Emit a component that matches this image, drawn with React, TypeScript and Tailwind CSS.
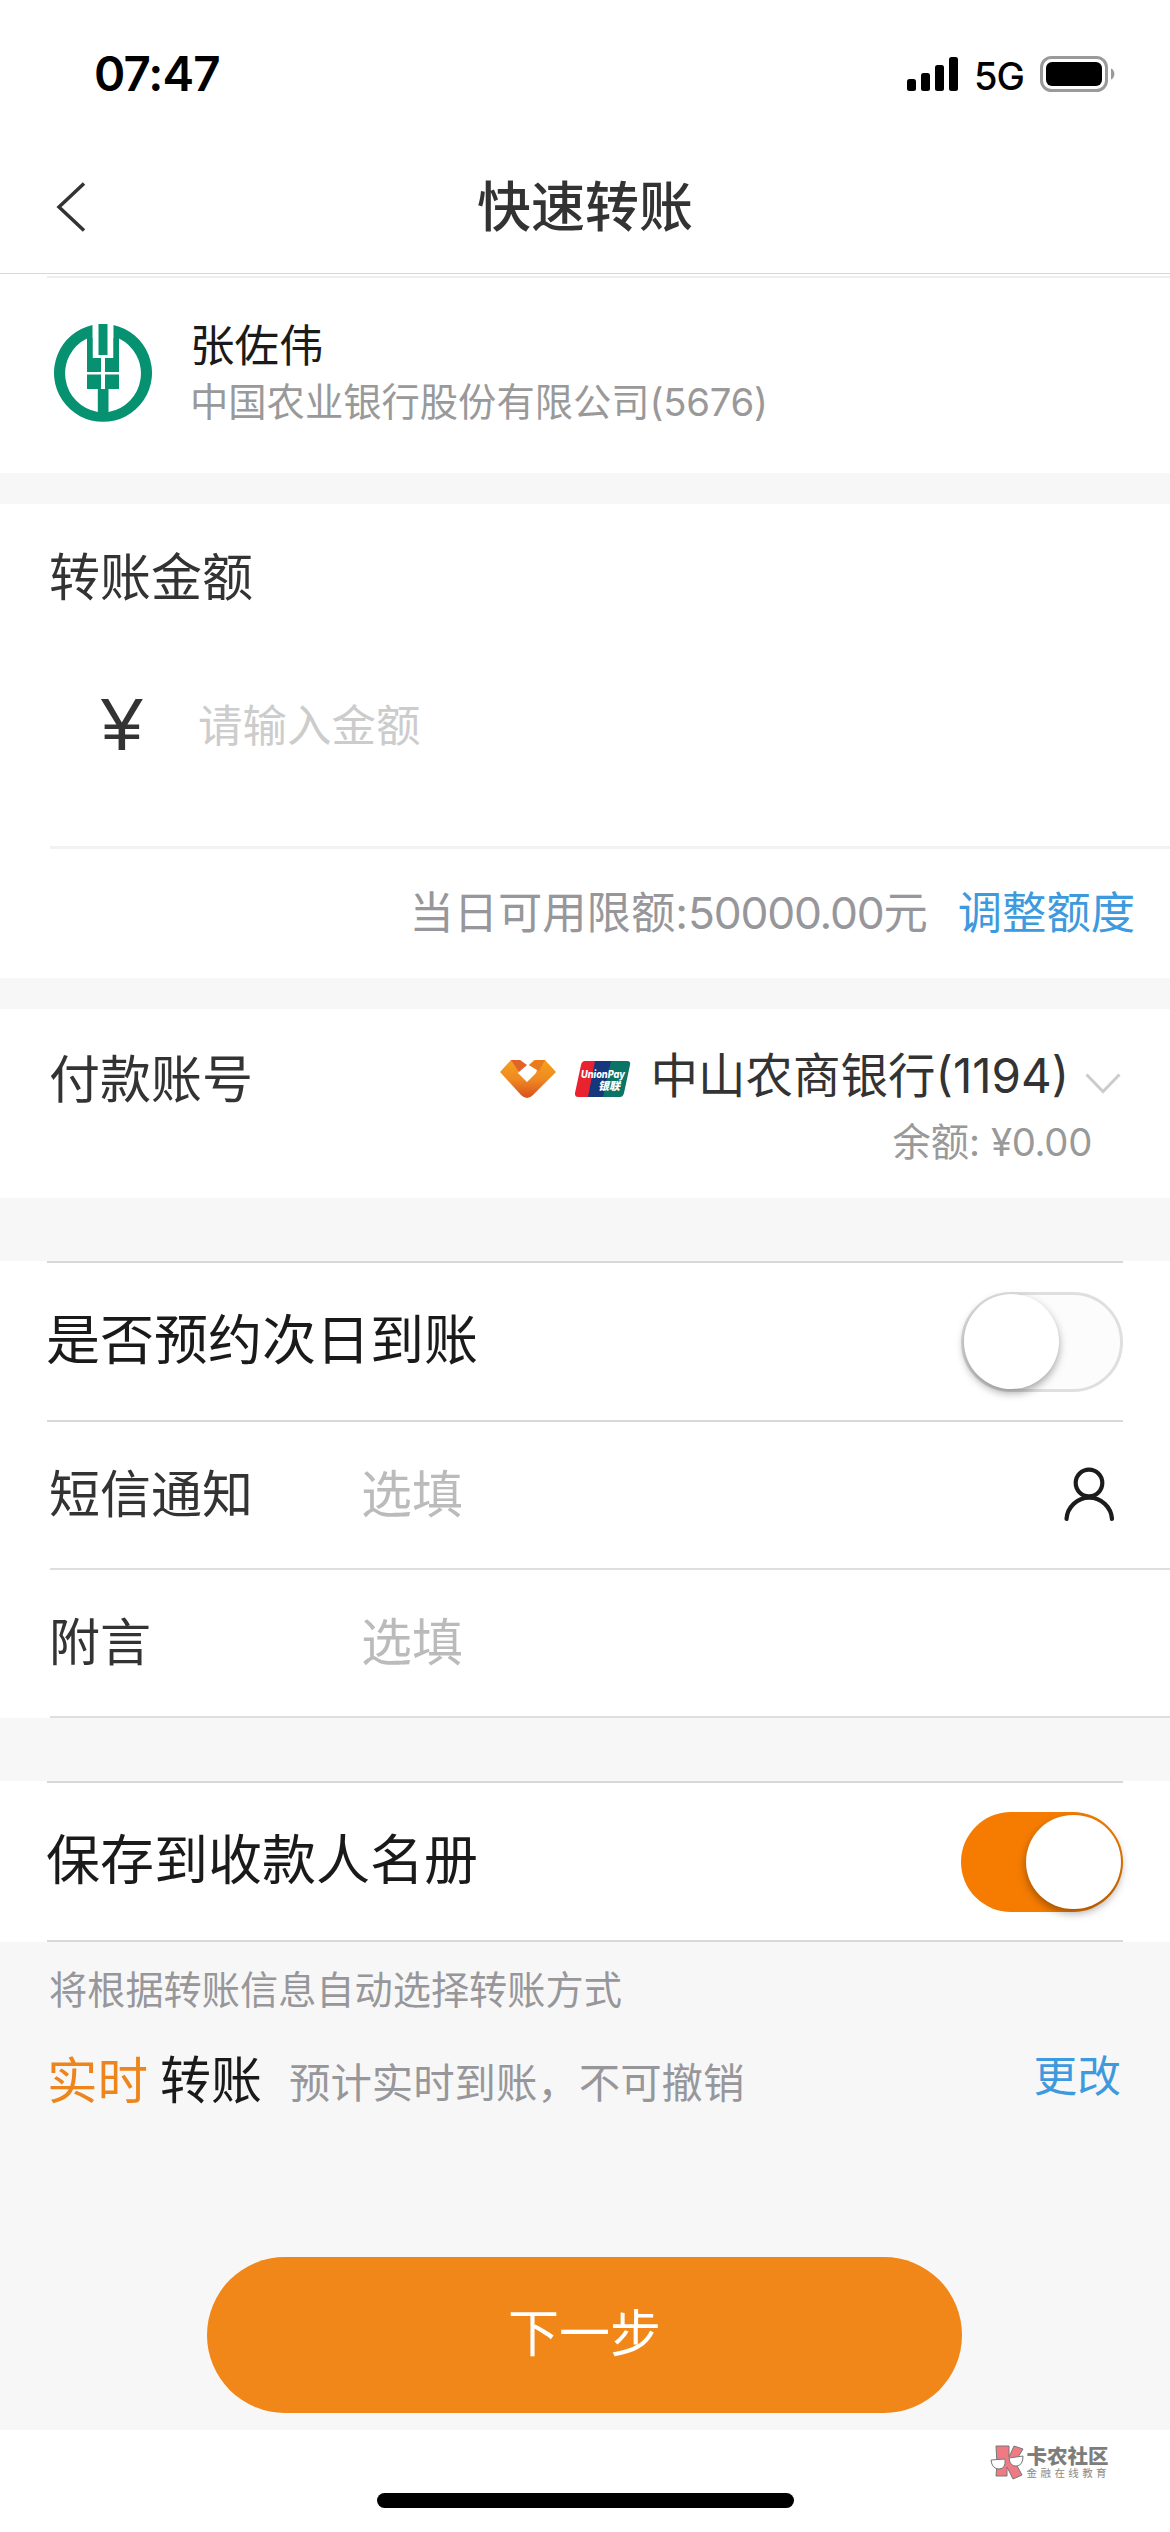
import type { ReactNode } from "react";

function StatusBar() {
    return (
        <div className="flex h-[148px] items-center justify-between pl-[94px] pr-[55px]">
            <div className="text-[47.500px] font-semibold leading-none tracking-[-0.9px] text-black">07:47</div>
            <div className="flex items-center">
                <svg width="51" height="34" viewBox="0 0 51 34" fill="#000">
                    <rect x="0" y="22" width="9" height="12" rx="2.5" />
                    <rect x="14" y="16" width="9" height="18" rx="2.5" />
                    <rect x="28" y="8" width="9" height="26" rx="2.5" />
                    <rect x="42" y="0" width="9" height="34" rx="2.5" />
                </svg>
                <div className="ml-[16px] mt-[3px] text-[38px] font-medium leading-none tracking-[-1px] text-black">5G</div>
                <svg className="ml-[16px]" width="75" height="36" viewBox="0 0 75 36">
                    <rect x="1.5" y="1.5" width="65" height="33" rx="10" fill="none" stroke="#9a9a9a" strokeWidth="3" />
                    <rect x="6" y="6" width="56" height="24" rx="6" fill="#000" />
                    <path d="M71 12.5c4.500 1.500 4.500 9.500 0 11z" fill="#9a9a9a" />
                </svg>
            </div>
        </div>
    );
}

function NavBar() {
    return (
        <div className="grid h-[126px] grid-cols-3 items-center border-b border-[#d8d8d8] px-[56px] pb-[7px]">
            <svg width="30" height="50" viewBox="0 0 30 50" fill="none" stroke="#333" strokeWidth="3.500">
                <path d="M28 1.500 3 25l25 23.500" />
            </svg>
            <div className="whitespace-nowrap pt-[2px] text-center text-[54px] font-medium leading-none text-[#333]">快速转账</div>
        </div>
    );
}

function AbcLogo() {
    return (
        <svg width="98" height="98" viewBox="0 0 98 98" fill="#069271">
            <path d="M38.500 1A49 49 0 1 0 59.500 1V34h5.500V14.500A39 39 0 0 1 54.500 88V65H43.800v23A39 39 0 0 1 33 14.500V34h5.500z" />
            <rect x="44.500" y="0" width="9" height="31" />
            <path d="M33 14h5.500v20H47v14H33zM65 14h-5.500v20H51v14h14z" />
            <path d="M33 50.500h14V65H33zM51 50.500h14V65H51z" />
        </svg>
    );
}

function RuralBankLogo() {
    return (
        <svg width="56" height="41" viewBox="0 0 56 41">
            <defs>
                <linearGradient id="rural" x1="0" y1="0" x2="0" y2="1">
                    <stop offset="0" stopColor="#f5a21c" />
                    <stop offset="0.500" stopColor="#ef8a22" />
                    <stop offset="1" stopColor="#d9501c" />
                </linearGradient>
            </defs>
            <path d="M11 1 0 13l21 23q6 6 12 0l23-23L45 1H34l-5 5 8 5-1 3-9 9-9-9 2-4 6-3-6-6z" fill="url(#rural)" />
            <path d="M11 1h9l7 5-8 7z" fill="#e0632a" />
            <path d="M45 1h-9l-7 5 10 6z" fill="#ea7a1e" />
        </svg>
    );
}

function UnionPayLogo() {
    return (
        <svg width="56" height="36" viewBox="0 0 56 36">
            <path d="M10 0h12l-7 36H3q-3.500 0-3-4L6 4q1-4 4-4z" fill="#e8232f" />
            <path d="M20 0h19l-7 36H13z" fill="#16377b" />
            <path d="M36 0h16q4 0 3 4l-6 28q-1 4-4 4H28z" fill="#0a7567" />
            <text x="6" y="17" fontSize="10.500" fontWeight="800" fontStyle="italic" fill="#fff" textLength="44" lengthAdjust="spacingAndGlyphs">UnionPay</text>
            <text x="23" y="29" fontSize="11" fontWeight="900" fontStyle="italic" fill="#fff">银联</text>
        </svg>
    );
}

function Watermark() {
    return (
        <div className="absolute right-[60px] top-[14px] flex items-center">
            <svg width="35" height="37" viewBox="0 0 35 37" stroke="#777" strokeWidth="1">
                <path d="M6 2h13v11l5-11 9 3-8 13 7 13-9 4-6-12v9H6l1-12z" fill="#ee7a84" />
                <path d="M1 16l14-1q1 10-6 10-7 0-8-9zM19 14l14-2q0 9-6 10-7 1-8-8z" fill="#fff" />
            </svg>
            <div className="ml-[2px]">
                <div className="text-[20.500px] font-black leading-[22px] text-[#7d7d7d]">卡农社区</div>
                <div className="text-[10.500px] leading-[12px] tracking-[3.400px] text-[#8a8a8a]">金融在线教育</div>
            </div>
        </div>
    );
}

function Toggle(props: { on: boolean }) {
    return props.on ? (
        <div className="flex h-[100px] w-[162px] items-center justify-end rounded-full bg-[#f57c00] pr-[2px]">
            <div className="h-[94px] w-[95px] rounded-full bg-white shadow-[0_4px_9px_rgba(0,0,0,0.35)]" />
        </div>
    ) : (
        <div className="flex h-[100px] w-[162px] items-center rounded-full border-[3px] border-[#dfdfdf] bg-[#fcfcfc]">
            <div className="h-[95px] w-[95px] rounded-full bg-white shadow-[0_4px_9px_rgba(0,0,0,0.35)]" />
        </div>
    );
}

function SwitchRow(props: { label: string, on: boolean }) {
    return (
        <div className="bg-white px-[47px]">
            <div className="flex h-[161px] items-center justify-between border-y-2 border-[#d8d8d8]">
                <div className="-ml-px pb-[2px] text-[54px] leading-none text-[#1a1a1a]">{props.label}</div>
                <Toggle on={props.on} />
            </div>
        </div>
    );
}

function InputRow(props: { label: string, children?: ReactNode }) {
    return (
        <div className="bg-white pl-[50px]">
            <div className="flex h-[148px] items-center border-b-2 border-[#dedede] pr-[54px]">
                <div className="-ml-px w-[312px] pb-px text-[51px] leading-none text-[#333]">{props.label}</div>
                <div className="flex-1 pb-px text-[51px] leading-none text-[#bbb]">选填</div>
                {props.children}
            </div>
        </div>
    );
}

export default function App() {
    return (
        <div className="flex h-[2532px] w-[1170px] flex-col overflow-hidden bg-[#f7f7f7] font-['Inter','Noto_Sans_CJK_SC',sans-serif]">
            <div className="bg-white">
                <StatusBar />
                <NavBar />
                <div className="ml-[47px] mt-[2px] h-[2px] bg-[#eee]" />
                <div className="flex h-[195px] pl-[54px] pt-[46px]">
                    <AbcLogo />
                    <div className="ml-[38px]">
                        <div className="text-[44.500px] leading-[45px] text-[#1a1a1a]">张佐伟</div>
                        <div className="mt-[14px] text-[38.300px] leading-[38px] text-[#999]">
                            中国农业银行股份有限公司<span className="tracking-[-0.3px]">(5676)</span>
                        </div>
                    </div>
                </div>
            </div>

            <div className="mt-[31px] bg-white">
                <div className="pl-[49px] pt-[48px] text-[51px] leading-[51px] text-[#333]">转账金额</div>
                <div className="ml-[50px] flex h-[246px] items-center border-b-[3px] border-[#f2f2f2] pl-[51px]">
                    <div className="w-[97px] font-['Liberation_Sans',sans-serif] text-[75px] leading-none text-[#333]">¥</div>
                    <div className="pt-[3px] text-[44.500px] leading-none text-[#ccc]">请输入金额</div>
                </div>
                <div className="flex h-[129px] items-center justify-end pr-[35px] text-[44.300px] leading-none">
                    <div className="text-[#97979b]">
                        当日可用限额:<span className="tracking-[-1.200px]">50000.00</span>元
                    </div>
                    <div className="ml-[30px] text-[#3d9ade]">调整额度</div>
                </div>
            </div>

            <div className="mt-[31px] flex h-[189px] justify-between bg-white pl-[49px] pr-[49px]">
                <div className="pt-[45px] text-[51px] leading-[51px] text-[#333]">付款账号</div>
                <div className="pt-[41px]">
                    <div className="flex items-center">
                        <div className="pt-[8px]">
                            <RuralBankLogo />
                        </div>
                        <div className="ml-[19px] pt-[6px]">
                            <UnionPayLogo />
                        </div>
                        <div className="ml-[20px] text-[47.500px] leading-[51px] text-[#333]">中山农商银行(1194)</div>
                        <svg className="ml-[16px] mt-[15px]" width="36" height="21" viewBox="0 0 36 21" fill="none" stroke="#ccc" strokeWidth="3">
                            <path d="M1.500 1.500 18 18.500 34.500 1.500" />
                        </svg>
                    </div>
                    <div className="mt-[22px] pr-[29px] text-right text-[38.300px] leading-[38px] text-[#999]">
                        余额: <span className="tracking-[-0.300px]">¥0.00</span>
                    </div>
                </div>
            </div>

            <div className="mt-[63px]">
                <SwitchRow label="是否预约次日到账" on={false} />
                <InputRow label="短信通知">
                    <svg width="52" height="56" viewBox="0 0 52 56" fill="none" stroke="#1c1c1c" strokeWidth="4.200" strokeLinecap="round">
                        <circle cx="25" cy="16" r="13.300" />
                        <path d="M2.500 52a22.800 22.800 0 0 1 45.500 0" />
                    </svg>
                </InputRow>
                <InputRow label="附言" />
            </div>

            <div className="mt-[63px]">
                <SwitchRow label="保存到收款人名册" on={true} />
            </div>

            <div className="flex h-[488px] flex-col px-[49px]">
                <div className="mt-[29px] text-[38.200px] leading-[38px] text-[#97979b]">将根据转账信息自动选择转账方式</div>
                <div className="-ml-[2px] mt-[43px] flex h-[57px] items-center leading-[52px]">
                    <div className="text-[50.500px] text-[#ee851c]">实时</div>
                    <div className="ml-[12px] text-[51px] text-[#1a1a1a]">转账</div>
                    <div className="ml-[27px] mt-[5px] text-[41.400px] text-[#97979b]">预计实时到账，不可撤销</div>
                    <div className="-mt-[7px] ml-auto text-[43.700px] text-[#3d9ade]">更改</div>
                </div>
                <button className="ml-[158px] mt-[148px] h-[156px] w-[755px] rounded-full bg-[#f18619] pb-[4px] text-[51px] leading-none text-white">下一步</button>
            </div>

            <div className="relative flex-1 bg-white">
                <div className="mx-auto mt-[63px] h-[15px] w-[417px] rounded-full bg-black" />
                <Watermark />
            </div>
        </div>
    );
}
